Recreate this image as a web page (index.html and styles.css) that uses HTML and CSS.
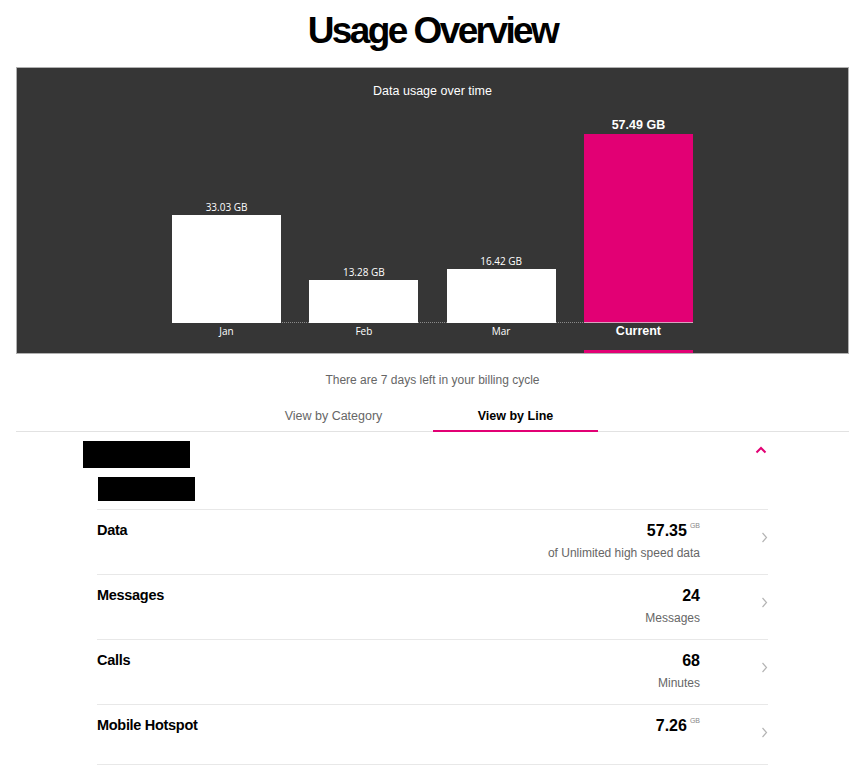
FILE: index.html
```html
<!DOCTYPE html>
<html lang="en">
<head>
    <meta charset="UTF-8">
    <meta name="viewport" content="width=device-width, initial-scale=1.0">
    <title>Usage Overview</title>
    <link rel="stylesheet" href="styles.css">
</head>
<body>
    <h1 class="page-title">Usage Overview</h1>

    <section class="chart">
        <div class="chart-caption">Data usage over time</div>
        <div class="chart-bars">
            <div class="bar-col">
                <div class="bar-value">33.03 GB</div>
                <div class="bar" style="height: 108px"></div>
                <div class="bar-month">Jan</div>
            </div>
            <div class="bar-col">
                <div class="bar-value">13.28 GB</div>
                <div class="bar" style="height: 43px"></div>
                <div class="bar-month">Feb</div>
            </div>
            <div class="bar-col">
                <div class="bar-value">16.42 GB</div>
                <div class="bar" style="height: 54px"></div>
                <div class="bar-month">Mar</div>
            </div>
            <div class="bar-col current">
                <div class="bar-value">57.49 GB</div>
                <div class="bar" style="height: 188px"></div>
                <div class="bar-month">Current</div>
            </div>
        </div>
    </section>

    <p class="cycle-note">There are 7 days left in your billing cycle</p>

    <nav class="tabs">
        <div class="tab">View by Category</div>
        <div class="tab active">View by Line</div>
    </nav>

    <section class="line">
        <div class="line-head">
            <div class="line-ids">
                <div class="redact redact-name"></div>
                <div class="redact redact-number"></div>
            </div>
            <svg class="collapse" width="12" height="8" viewBox="0 0 12 8"><path d="M1.5 6.5 L6 2 L10.5 6.5" fill="none" stroke="#e20074" stroke-width="2"/></svg>
        </div>

        <div class="usage-list">
            <div class="usage-row">
                <div class="usage-name">Data</div>
                <div class="usage-amount">
                    <div class="usage-value">57.35<sup>GB</sup></div>
                    <div class="usage-sub">of Unlimited high speed data</div>
                </div>
                <svg class="row-arrow" width="7" height="11" viewBox="0 0 7 11"><path d="M1.5 1 L5.5 5.5 L1.5 10" fill="none" stroke="#b5b5b5" stroke-width="1.2"/></svg>
            </div>
            <div class="usage-row">
                <div class="usage-name">Messages</div>
                <div class="usage-amount">
                    <div class="usage-value">24</div>
                    <div class="usage-sub">Messages</div>
                </div>
                <svg class="row-arrow" width="7" height="11" viewBox="0 0 7 11"><path d="M1.5 1 L5.5 5.5 L1.5 10" fill="none" stroke="#b5b5b5" stroke-width="1.2"/></svg>
            </div>
            <div class="usage-row">
                <div class="usage-name">Calls</div>
                <div class="usage-amount">
                    <div class="usage-value">68</div>
                    <div class="usage-sub">Minutes</div>
                </div>
                <svg class="row-arrow" width="7" height="11" viewBox="0 0 7 11"><path d="M1.5 1 L5.5 5.5 L1.5 10" fill="none" stroke="#b5b5b5" stroke-width="1.2"/></svg>
            </div>
            <div class="usage-row">
                <div class="usage-name">Mobile Hotspot</div>
                <div class="usage-amount">
                    <div class="usage-value">7.26<sup>GB</sup></div>
                </div>
                <svg class="row-arrow" width="7" height="11" viewBox="0 0 7 11"><path d="M1.5 1 L5.5 5.5 L1.5 10" fill="none" stroke="#b5b5b5" stroke-width="1.2"/></svg>
            </div>
        </div>
    </section>
</body>
</html>
```

FILE: styles.css
```css
body {
    margin: 0;
    padding: 0 16px;
    font-family: "Liberation Sans", Arial, sans-serif;
    color: #000;
    background: #fff;
}
.page-title {
    margin: 0;
    padding: 11px 0 0;
    height: 67px;
    box-sizing: border-box;
    text-align: center;
    font-size: 37px;
    font-weight: bold;
    letter-spacing: -2.6px;
    line-height: 40px;
}

/* chart */
.chart {
    background: #363636;
    border: 1px solid #b0b0b0;
    height: 287px;
    box-sizing: border-box;
    display: flex;
    flex-direction: column;
    align-items: center;
}
.chart-caption {
    color: #fff;
    font-size: 12.5px;
    margin-top: 16px;
}
.chart-bars {
    margin-top: 17px;
    display: grid;
    grid-template-columns: repeat(4, 109px);
    grid-template-rows: 238px;
    column-gap: 28.3px;
    height: 238px;
    position: relative;
}
.chart-bars::after {
    content: "";
    position: absolute;
    left: 0;
    right: 0;
    top: 207px;
    border-top: 1px dotted #8a8a8a;
}
.bar-col {
    display: flex;
    flex-direction: column;
    justify-content: flex-end;
    position: relative;
    z-index: 1;
}
.bar-value {
    color: #fff;
    font-family: "Open Sans", sans-serif;
    font-size: 10px;
    text-align: center;
    line-height: 13px;
    margin-bottom: 1px;
}
.bar {
    background: #fff;
}
.bar-month {
    color: #fff;
    font-family: "Open Sans", sans-serif;
    font-size: 10px;
    text-align: center;
    line-height: 16px;
    height: 30px;
}
.current .bar {
    background: #e20074;
    border-bottom: 1px solid #d9a3bf;
}
.current .bar-value {
    font-family: "Liberation Sans", Arial, sans-serif;
    font-weight: bold;
    font-size: 12.5px;
    line-height: 16px;
    margin-bottom: 1px;
}
.current .bar-month {
    font-family: "Liberation Sans", Arial, sans-serif;
    font-weight: bold;
    font-size: 12.5px;
    line-height: 16px;
    border-bottom: 3px solid #e20074;
    box-sizing: border-box;
    height: 30px;
}

.cycle-note {
    margin: 19px 0 0;
    text-align: center;
    font-size: 12px;
    color: #666;
    line-height: 14px;
}

/* tabs */
.tabs {
    margin-top: 22px;
    display: flex;
    justify-content: center;
    gap: 17px;
    padding-right: 16px;
    border-bottom: 1px solid #e2e2e2;
}
.tab {
    width: 165px;
    text-align: center;
    font-size: 12.5px;
    color: #666;
    line-height: 15px;
    padding-bottom: 6px;
    border-bottom: 2px solid transparent;
    margin-bottom: -1px;
}
.tab.active {
    color: #000;
    font-weight: bold;
    border-bottom-color: #e20074;
}

/* line details */
.line-head {
    display: flex;
    justify-content: space-between;
    align-items: flex-start;
    padding: 9px 82px 0 67px;
    height: 77px;
    box-sizing: border-box;
}
.line-ids {
    display: flex;
    flex-direction: column;
    gap: 9px;
}
.redact {
    background: #000;
}
.redact-name {
    width: 107px;
    height: 27px;
}
.redact-number {
    width: 97px;
    height: 24px;
    margin-left: 15px;
}
.collapse {
    margin-top: 5px;
}

.usage-list {
    margin: 0 81px;
    border-top: 1px solid #e8e8e8;
}
.usage-row {
    display: flex;
    align-items: flex-start;
    min-height: 60px;
    padding: 11px 0 14px;
    border-bottom: 1px solid #e8e8e8;
    box-sizing: border-box;
}
.usage-name {
    flex: 1;
    font-size: 14.5px;
    font-weight: bold;
    letter-spacing: -0.3px;
    line-height: 17px;
    margin-top: 1px;
}
.usage-amount {
    text-align: right;
}
.usage-value {
    font-size: 16px;
    font-weight: bold;
    line-height: 19px;
}
.usage-value sup {
    font-size: 7px;
    font-weight: normal;
    color: #888;
    margin-left: 3px;
    line-height: 0;
    vertical-align: baseline;
    position: relative;
    top: -8px;
}
.usage-sub {
    margin-top: 6px;
    font-size: 12px;
    color: #666;
    line-height: 14px;
}
.row-arrow {
    margin: 11px 0 0 61px;
}
```
